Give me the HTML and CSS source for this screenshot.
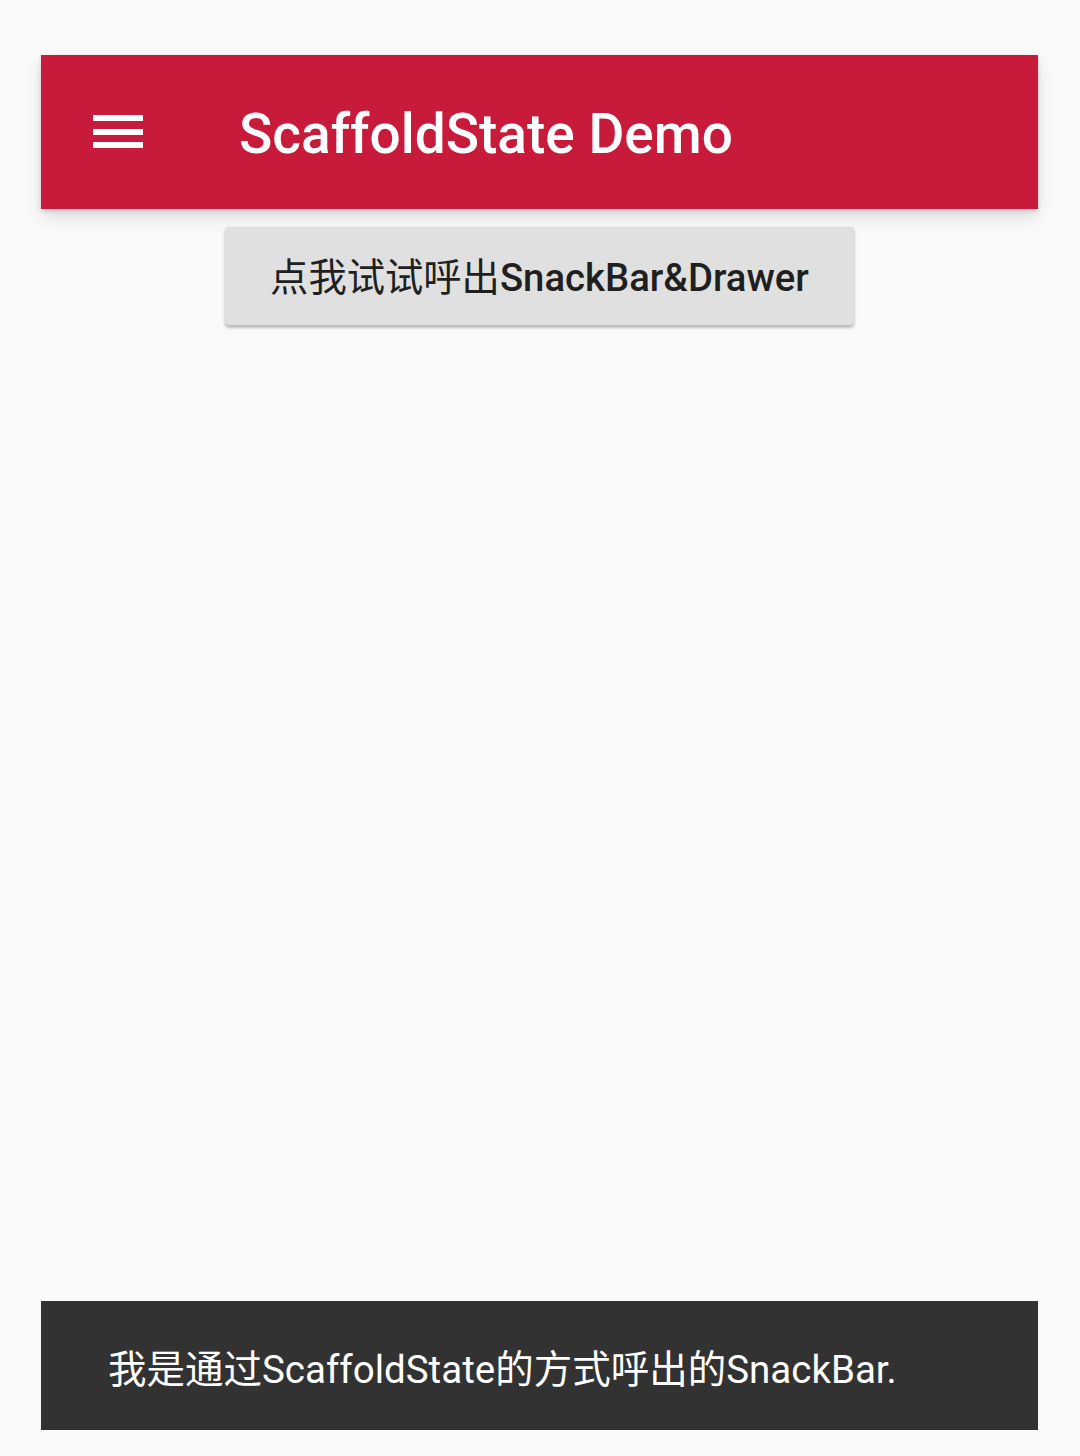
FILE: index.html
```html
<!DOCTYPE html>
<html lang="zh">
<head>
<meta charset="utf-8">
<title>ScaffoldState Demo</title>
<link rel="stylesheet" href="styles.css">
</head>
<body>
<div class="screen">
  <header class="appbar">
    <button class="menu" aria-label="menu">
      <svg width="50" height="34" viewBox="0 0 50 34"><rect x="0" y="0" width="50" height="6" fill="#fff"/><rect x="0" y="14" width="50" height="6" fill="#fff"/><rect x="0" y="27" width="50" height="6" fill="#fff"/></svg>
    </button>
    <h1 class="title">ScaffoldState Demo</h1>
  </header>
  <main class="content">
    <button class="raised"><span class="cjk">点我试试呼出</span>SnackBar&amp;Drawer</button>
  </main>
  <div class="snackbar">我是通过ScaffoldState的方式呼出的SnackBar.</div>
</div>
</body>
</html>
```
FILE: styles.css
```css
html, body {
  margin: 0;
  padding: 0;
  background: #fafafa;
}
body {
  font-family: Roboto, "Noto Sans CJK SC", sans-serif;
}
.screen {
  width: 1080px;
  height: 1456px;
  box-sizing: border-box;
  padding: 55px 42px 26px 41px;
  display: flex;
  flex-direction: column;
}
.appbar {
  height: 154px;
  background: #c81b3b;
  display: flex;
  align-items: center;
  box-shadow: 0 8px 16px rgba(0,0,0,0.12), 0 2px 4px rgba(0,0,0,0.14);
  position: relative;
  z-index: 1;
  flex: none;
}
.menu {
  background: none;
  border: 0;
  padding: 0;
  margin: 0 0 0 52px;
  width: 50px;
  height: 34px;
  display: block;
}
.menu svg { display: block; }
.title {
  margin: 4px 0 0 96px;
  color: #fff;
  font-size: 55px;
  font-weight: 500;
  line-height: 1;
}
.content {
  flex: 1;
  display: flex;
  flex-direction: column;
  align-items: center;
  padding-top: 18px;
}
.raised {
  width: 629px;
  height: 98px;
  background: #e0e0e0;
  border: 0;
  border-radius: 4px;
  box-shadow: 0 3px 3px rgba(0,0,0,0.2), 0 1px 4px rgba(0,0,0,0.12);
  font-family: Roboto, "Noto Sans CJK SC", sans-serif;
  font-size: 38.3px;
  font-weight: 500;
  color: #1f1f1f;
  padding: 0 0 4px 0;
}
.cjk {
  font-weight: 400;
}
.snackbar {
  flex: none;
  height: 129px;
  background: #323232;
  color: #fff;
  font-size: 38.5px;
  display: flex;
  align-items: center;
  padding-left: 67px;
  box-sizing: border-box;
}
```
